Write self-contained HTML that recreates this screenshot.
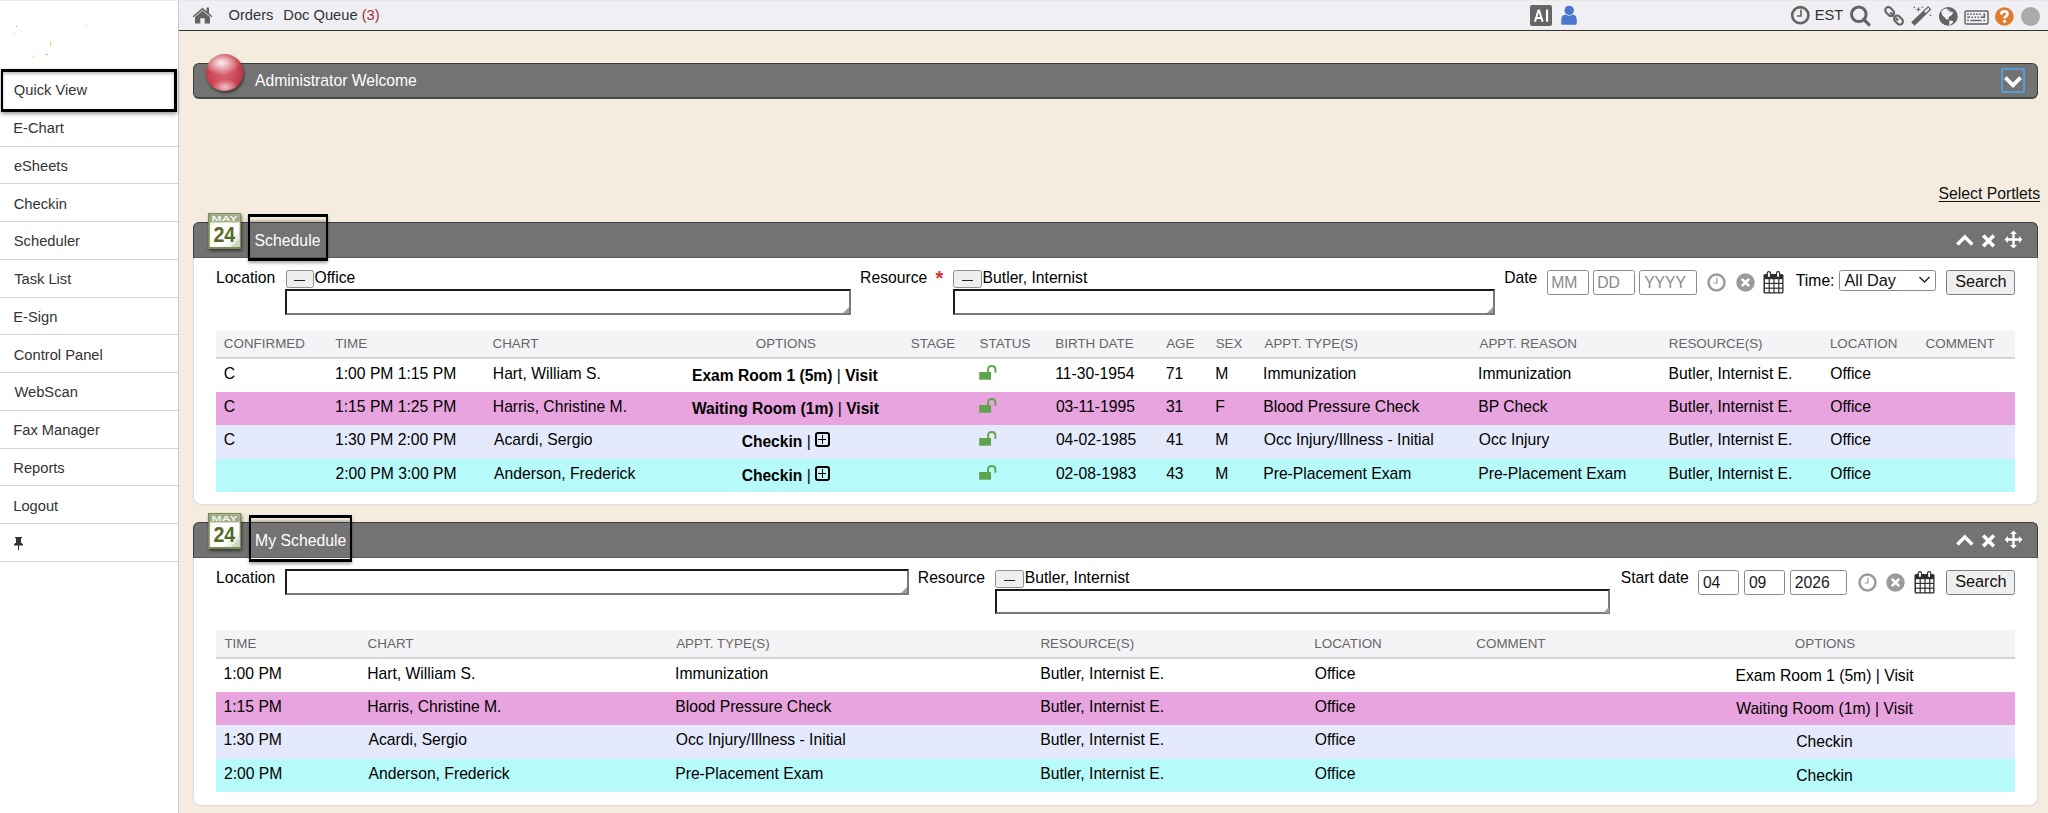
<!DOCTYPE html>
<html><head><meta charset="utf-8"><style>
html,body{margin:0;padding:0;width:2048px;height:813px;overflow:hidden;background:#f3ecdf}
body{position:relative;font-family:"Liberation Sans",sans-serif}
.t{position:absolute;white-space:pre;font-family:"Liberation Sans",sans-serif}
</style></head><body>
<div style="position:absolute;left:0px;top:0px;width:2048px;height:1px;background:#e9e9e9"></div>
<div style="position:absolute;left:0px;top:1px;width:178px;height:812px;background:#fff"></div>
<div style="position:absolute;left:178px;top:1px;width:1px;height:812px;background:#c8c9d0"></div>
<div style="position:absolute;left:179px;top:1px;width:1869px;height:29px;background:#efeff4"></div>
<div style="position:absolute;left:179px;top:30px;width:1869px;height:1px;background:#333"></div>
<div style="position:absolute;left:179px;top:31px;width:1869px;height:782px;background:#f3ecdf"></div>
<div style="position:absolute;left:16px;top:26px;width:1px;height:1px;background:#e0a030"></div>
<div style="position:absolute;left:14px;top:33px;width:1px;height:1px;background:#f0d070"></div>
<div style="position:absolute;left:50px;top:41px;width:1px;height:5px;background:#f0d060"></div>
<div style="position:absolute;left:46px;top:54px;width:2px;height:1px;background:#e8c030"></div>
<div style="position:absolute;left:33px;top:56px;width:1px;height:2px;background:#f0d060"></div>
<div style="position:absolute;left:39px;top:55px;width:1px;height:1px;background:#f4e4a0"></div>
<div style="position:absolute;left:86px;top:25px;width:1px;height:1px;background:#b0b0c0"></div>
<div style="position:absolute;left:0px;top:146px;width:178px;height:1px;background:#d4d4d4"></div>
<div style="position:absolute;left:0px;top:183px;width:178px;height:1px;background:#d4d4d4"></div>
<div style="position:absolute;left:0px;top:221px;width:178px;height:1px;background:#d4d4d4"></div>
<div style="position:absolute;left:0px;top:259px;width:178px;height:1px;background:#d4d4d4"></div>
<div style="position:absolute;left:0px;top:297px;width:178px;height:1px;background:#d4d4d4"></div>
<div style="position:absolute;left:0px;top:334px;width:178px;height:1px;background:#d4d4d4"></div>
<div style="position:absolute;left:0px;top:372px;width:178px;height:1px;background:#d4d4d4"></div>
<div style="position:absolute;left:0px;top:410px;width:178px;height:1px;background:#d4d4d4"></div>
<div style="position:absolute;left:0px;top:448px;width:178px;height:1px;background:#d4d4d4"></div>
<div style="position:absolute;left:0px;top:485px;width:178px;height:1px;background:#d4d4d4"></div>
<div style="position:absolute;left:0px;top:523px;width:178px;height:1px;background:#d4d4d4"></div>
<div style="position:absolute;left:0px;top:561px;width:178px;height:1px;background:#d4d4d4"></div>
<span class="t" style="left:13.29px;top:120.22px;font-size:14.7px;line-height:16.423px;color:#333;">E-Chart</span>
<span class="t" style="left:13.88px;top:157.97px;font-size:14.7px;line-height:16.423px;color:#333;">eSheets</span>
<span class="t" style="left:13.75px;top:195.72px;font-size:14.7px;line-height:16.423px;color:#333;">Checkin</span>
<span class="t" style="left:13.83px;top:233.47px;font-size:14.7px;line-height:16.423px;color:#333;">Scheduler</span>
<span class="t" style="left:14.17px;top:271.22px;font-size:14.7px;line-height:16.423px;color:#333;">Task List</span>
<span class="t" style="left:13.29px;top:308.97px;font-size:14.7px;line-height:16.423px;color:#333;">E-Sign</span>
<span class="t" style="left:13.75px;top:346.72px;font-size:14.7px;line-height:16.423px;color:#333;">Control Panel</span>
<span class="t" style="left:14.44px;top:384.47px;font-size:14.7px;line-height:16.423px;color:#333;">WebScan</span>
<span class="t" style="left:13.29px;top:422.22px;font-size:14.7px;line-height:16.423px;color:#333;">Fax Manager</span>
<span class="t" style="left:13.29px;top:459.97px;font-size:14.7px;line-height:16.423px;color:#333;">Reports</span>
<span class="t" style="left:13.29px;top:497.72px;font-size:14.7px;line-height:16.423px;color:#333;">Logout</span>
<div style="position:absolute;left:1px;top:69px;width:171px;height:36.5px;border-style:solid;border-color:#000;border-width:3px 3px 3px 2px;box-shadow:0 2px 4px rgba(0,0,0,.4), inset 0 2px 3px rgba(0,0,0,.25);background:#fff"></div>
<span class="t" style="left:13.80px;top:81.69px;font-size:14.7px;line-height:16.423px;color:#333;">Quick View</span>
<svg style="position:absolute;left:13px;top:537px" width="11" height="13" viewBox="0 0 11 13"><path d="M2 0h7v1.2H8v4.3l2 1.7v1.2H6v4.8H5V8.4H1V7.2l2-1.7V1.2H2z" fill="#333"/></svg>
<svg style="position:absolute;left:192px;top:7px" width="21" height="17" viewBox="0 0 21 17"><path d="M10.5 0.8 L0.6 9.2 L1.6 10.3 L10.5 2.9 L19.4 10.3 L20.4 9.2 L17 6.3 V0.5 H14.6 V4.3 Z" fill="#646464"/><path d="M3 10 L10.5 3.8 L18 10 V16.5 H12.7 V11.2 H8.3 V16.5 H3 Z" fill="#646464"/></svg>
<span class="t" style="left:228.50px;top:6.69px;font-size:14.7px;line-height:16.423px;color:#333;">Orders</span>
<span class="t" style="left:283.29px;top:6.69px;font-size:14.7px;line-height:16.423px;color:#333;">Doc Queue <span style="color:#a03030">(3)</span></span>
<div style="position:absolute;left:1530px;top:5px;width:22px;height:21px;background:#646665;border-radius:2px"></div>
<svg style="position:absolute;left:1520px;top:0px" width="40" height="30" viewBox="0 0 40 30"><path fill-rule="evenodd" d="M13.9 21.7 L17.7 9.6 L19.8 9.6 L23.6 21.7 L21.5 21.7 L20.6 18.9 L16.9 18.9 L16 21.7Z M17.4 17.1 L20.1 17.1 L18.75 12.6Z" fill="#fff"/><rect x="26" y="9.6" width="2.1" height="12.1" fill="#fff"/></svg>
<svg style="position:absolute;left:1561px;top:5px" width="16" height="21" viewBox="0 0 16 21"><circle cx="8.2" cy="5.4" r="4.7" fill="#4a77cc"/><path d="M0.2 15.5 Q0.2 9.8 4.5 9.8 L5.2 9.8 Q8.2 11.6 11.2 9.8 L11.7 9.8 Q15.8 9.8 15.8 15.5 V18.5 Q15.8 19.8 14.3 19.8 H1.7 Q0.2 19.8 0.2 18.5Z" fill="#4a77cc"/></svg>
<svg style="position:absolute;left:1790px;top:5px" width="21" height="21" viewBox="0 0 21 21"><circle cx="10.3" cy="10.2" r="8.1" fill="none" stroke="#646464" stroke-width="2.6"/><path d="M11 4.6 V11 H7" fill="none" stroke="#646464" stroke-width="1.6"/></svg>
<span class="t" style="left:1814.79px;top:6.89px;font-size:14.7px;line-height:16.423px;color:#333;">EST</span>
<svg style="position:absolute;left:1849px;top:5px" width="24" height="22" viewBox="0 0 24 22"><circle cx="9.8" cy="9.3" r="7.3" fill="none" stroke="#646464" stroke-width="3"/><path d="M14.8 14.5 L20 19.7" stroke="#646464" stroke-width="3.2" stroke-linecap="round"/></svg>
<svg style="position:absolute;left:1880px;top:2px" width="56" height="28" viewBox="0 0 56 28"><g fill="none" stroke="#646464" stroke-width="2.1"><rect x="6.6" y="4.6" width="6.2" height="10" rx="3.1" transform="rotate(-45 9.7 9.6)"/><rect x="15.4" y="13.1" width="6.2" height="10" rx="3.1" transform="rotate(-45 18.5 18.1)"/></g><g fill="#646464"><rect x="10.3" y="10" width="2.2" height="3.4" transform="rotate(-45 11.4 11.7)"/><rect x="15.8" y="15.5" width="2.2" height="3.4" transform="rotate(-45 16.9 17.2)"/></g><path d="M31.2 20.3 L48.2 4.1 L51.3 7.4 L34.6 23.8 Z" fill="#646464"/><path d="M44.2 9.6 L48.3 5.8 L49.6 7.2 L45.6 11 Z" fill="#efeff4"/><path d="M38.4 4.6 L39.1 6.7 L41.2 7.4 L39.1 8.1 L38.4 10.3 L37.7 8.1 L35.6 7.4 L37.7 6.7Z M34.3 4 L34.7 4.9 L35.6 5.3 L34.7 5.7 L34.3 6.6 L33.9 5.7 L33 5.3 L33.9 4.9Z M42.2 3.9 L42.6 4.8 L43.5 5.2 L42.6 5.6 L42.2 6.5 L41.8 5.6 L40.9 5.2 L41.8 4.8Z M50.4 12 L50.8 12.9 L51.7 13.3 L50.8 13.7 L50.4 14.6 L50 13.7 L49.1 13.3 L50 12.9Z" fill="#646464"/></svg>
<svg style="position:absolute;left:1939px;top:7px" width="19" height="19" viewBox="0 0 19 19"><circle cx="9.3" cy="9.4" r="9.4" fill="#646464"/><path d="M2.2 4.6 L5 2 L8 1.6 L8.8 3 L10.2 2.6 L10.8 4.2 L14.6 5.4 L12.4 8.2 L10 9.8 L9.4 12.6 L7.6 12.4 L5.4 10.2 L3.4 8.2 Z M10 14.2 L12.2 13.4 L14.8 14.8 L11.8 17.6 L10.2 18.2 L10.4 16 Z" fill="#efeff4"/><path d="M8.4 3.2 L9.6 3.6 L9.2 4.6 Z M10.6 4.6 L11.6 5.2 L10.8 5.8Z" fill="#646464"/></svg>
<svg style="position:absolute;left:1964px;top:10px" width="25" height="15" viewBox="0 0 25 15"><rect x="1" y="1" width="23" height="13" rx="1.5" fill="none" stroke="#646464" stroke-width="1.5"/><g fill="#646464"><rect x="3.2" y="3.4" width="1.6" height="1.6"/><rect x="6.2" y="3.4" width="1.6" height="1.6"/><rect x="9.2" y="3.4" width="1.6" height="1.6"/><rect x="12.2" y="3.4" width="1.6" height="1.6"/><rect x="15.2" y="3.4" width="1.6" height="1.6"/><rect x="19.5" y="3.4" width="1.6" height="4.5"/><rect x="3.2" y="6.5" width="3" height="1.5"/><rect x="7.5" y="6.5" width="1.5" height="1.5"/><rect x="10.5" y="6.5" width="1.5" height="1.5"/><rect x="13.5" y="6.5" width="1.5" height="1.5"/><rect x="16.5" y="6.5" width="3.5" height="1.5"/><rect x="3.2" y="9.6" width="1.6" height="1.6"/><rect x="6.5" y="9.8" width="11" height="1.4"/><rect x="19.5" y="9.6" width="1.6" height="1.6"/></g></svg>
<svg style="position:absolute;left:1995px;top:7px" width="19" height="19" viewBox="0 0 19 19"><circle cx="9.4" cy="9.5" r="9.35" fill="#e07b31"/><path d="M6.3 7.4 Q6.3 4.3 9.3 4.3 Q12.5 4.3 12.5 6.9 Q12.5 8.3 11 9.2 Q9.6 10 9.6 11.6" fill="none" stroke="#fff" stroke-width="2.7"/><rect x="8.2" y="13" width="2.8" height="2.8" fill="#fff"/></svg>
<div style="position:absolute;left:2021px;top:7px;width:19px;height:19px;border-radius:50%;background:#aaa"></div>
<div style="position:absolute;left:193px;top:63px;width:1843px;height:33px;background:#737373;border:1px solid #3e3e3e;border-bottom:2px solid #4a4a4a;border-radius:6px"></div>
<div style="position:absolute;left:206px;top:54px;width:36.5px;height:36.5px;border-radius:50%;background:radial-gradient(ellipse 50% 32% at 42% 24%, rgba(255,255,255,.92) 0%, rgba(255,240,242,.55) 45%, rgba(255,255,255,0) 100%), radial-gradient(ellipse 38% 22% at 52% 90%, rgba(255,225,230,.8) 0%, rgba(255,225,230,0) 100%), radial-gradient(circle at 48% 50%, #d86876 0%, #cf4b59 45%, #c0303d 78%, #a51e2a 100%);box-shadow:1px 2px 3px rgba(0,0,0,.55)"></div>
<span class="t" style="left:254.97px;top:71.69px;font-size:15.7px;line-height:17.540px;color:#fff;">Administrator Welcome</span>
<div style="position:absolute;left:2001px;top:68px;width:20px;height:21px;border:2px solid #5b9ad8;border-radius:2px"></div>
<svg style="position:absolute;left:2003px;top:75px" width="20" height="14" viewBox="0 0 20 14"><path d="M2.4 2.6 L10 10.4 L17.6 2.6" fill="none" stroke="#fff" stroke-width="3.8"/></svg>
<span class="t" style="left:1938.58px;top:184.54px;font-size:15.75px;line-height:17.596px;color:#111;text-decoration:underline;text-underline-offset:2px">Select Portlets</span>
<div style="position:absolute;left:194px;top:257px;width:1843px;height:247px;background:#fff;border-radius:0 0 7px 7px;box-shadow:0 0 2px 0 rgba(140,150,200,.6)"></div>
<div style="position:absolute;left:193px;top:222px;width:1843px;height:34px;background:#737373;border:1px solid #3d3d3d;border-bottom:1px solid #5a5a5a;border-radius:6px 6px 0 0"></div>
<div style="position:absolute;left:207.6px;top:213px;width:33.5px;height:36px;box-shadow:1px 2px 3px rgba(0,0,0,.55)"><svg width="33.5" height="36" viewBox="0 0 33.5 36" style="display:block"><defs><linearGradient id="cg1" x1="0" y1="0" x2="1" y2="1"><stop offset="0" stop-color="#e4e4e0"/><stop offset=".3" stop-color="#fff"/><stop offset=".7" stop-color="#fbfbf9"/><stop offset="1" stop-color="#dcdcd4"/></linearGradient></defs><rect x="0" y="0" width="33.5" height="36" fill="#7b8c55"/><rect x="1.8" y="1.2" width="29.9" height="32.8" fill="url(#cg1)"/><rect x="1.8" y="1.2" width="29.9" height="7.8" fill="#9da987"/><rect x="1.8" y="8.6" width="29.9" height="1" fill="#b9c3a4"/><text x="16.6" y="7.9" text-anchor="middle" font-family="Liberation Sans" font-size="7.4" fill="#f2f4ec" font-weight="700" textLength="26" lengthAdjust="spacingAndGlyphs">MAY</text><text x="16.3" y="28.9" text-anchor="middle" font-family="Liberation Sans" font-size="22.5" font-weight="700" fill="#56692a" textLength="21.8" lengthAdjust="spacingAndGlyphs">24</text><path d="M22.5 34 L31.7 25 L31.7 34Z" fill="#cdd5bb"/><path d="M22.5 34 L31.7 25" stroke="#e8ece0" stroke-width=".8"/></svg></div>
<div style="position:absolute;left:250px;top:217px;width:76px;height:5px;background:#f3ecdf;box-shadow:inset 0 -2px 2px rgba(0,0,0,.2)"></div>
<div style="position:absolute;left:248px;top:214px;width:76px;height:41px;border-style:solid;border-color:#000;border-width:3px 2px 3px 2px;box-shadow:0 2px 3px rgba(0,0,0,.35)"></div>
<span class="t" style="left:254.58px;top:231.90px;font-size:15.8px;line-height:17.652px;color:#fff;">Schedule</span>
<svg style="position:absolute;left:1955px;top:234px" width="20" height="13" viewBox="0 0 20 13"><path d="M2.3 10.5 L9.8 3 L17.3 10.5" fill="none" stroke="#fff" stroke-width="3.4"/></svg>
<svg style="position:absolute;left:1981px;top:234px" width="15" height="14" viewBox="0 0 15 14"><path d="M2.2 1.6 L12.8 12.2 M12.8 1.6 L2.2 12.2" fill="none" stroke="#fff" stroke-width="3.6"/></svg>
<svg style="position:absolute;left:2004px;top:230px" width="19" height="19" viewBox="0 0 19 19"><path d="M9.5 0.5 L13 4 H10.7 V8.3 H15 V6 L18.5 9.5 L15 13 V10.7 H10.7 V15 H13 L9.5 18.5 L6 15 H8.3 V10.7 H4 V13 L0.5 9.5 L4 6 V8.3 H8.3 V4 H6Z" fill="#fff"/></svg>
<span class="t" style="left:215.91px;top:268.89px;font-size:15.7px;line-height:17.540px;color:#000;">Location</span>
<div style="position:absolute;left:285.5px;top:270.20000000000005px;width:26.5px;height:16.3px;background:#efefef;border:1px solid #8f8f8f;border-radius:2.5px"></div>
<div style="position:absolute;left:294.0px;top:279.90000000000003px;width:11px;height:1.3px;background:#222"></div>
<span class="t" style="left:314.56px;top:268.89px;font-size:15.7px;line-height:17.540px;color:#000;">Office</span>
<div style="position:absolute;left:285px;top:289px;width:562px;height:21.5px;background:#fff;border:2px solid;border-color:#1b1b1b #7a7a7a #7a7a7a #1b1b1b"></div>
<svg style="position:absolute;left:843px;top:306.5px" width="6" height="6" viewBox="0 0 6 6"><path d="M6 0 V6 H0Z" fill="#a0a0a0"/></svg>
<span class="t" style="left:860.11px;top:268.89px;font-size:15.7px;line-height:17.540px;color:#000;">Resource</span>
<span class="t" style="left:935.44px;top:267.39px;font-size:20px;line-height:22.344px;color:#d9302c;font-weight:700;">*</span>
<div style="position:absolute;left:953px;top:269.90000000000003px;width:26.5px;height:16.3px;background:#efefef;border:1px solid #8f8f8f;border-radius:2.5px"></div>
<div style="position:absolute;left:961.5px;top:279.6px;width:11px;height:1.3px;background:#222"></div>
<span class="t" style="left:982.61px;top:268.89px;font-size:15.7px;line-height:17.540px;color:#000;">Butler, Internist</span>
<div style="position:absolute;left:953px;top:289px;width:538px;height:21.5px;background:#fff;border:2px solid;border-color:#1b1b1b #7a7a7a #7a7a7a #1b1b1b"></div>
<svg style="position:absolute;left:1487px;top:306.5px" width="6" height="6" viewBox="0 0 6 6"><path d="M6 0 V6 H0Z" fill="#a0a0a0"/></svg>
<span class="t" style="left:1504.21px;top:268.79px;font-size:15.7px;line-height:17.540px;color:#000;">Date</span>
<div style="position:absolute;left:1547px;top:270px;width:40px;height:23px;background:#fff;border:1px solid #8a8a8a;border-radius:2.5px"></div>
<span class="t" style="left:1551.21px;top:274.49px;font-size:15.7px;line-height:17.540px;color:#8a8a8a;">MM</span>
<div style="position:absolute;left:1593px;top:270px;width:40px;height:23px;background:#fff;border:1px solid #8a8a8a;border-radius:2.5px"></div>
<span class="t" style="left:1597.21px;top:274.49px;font-size:15.7px;line-height:17.540px;color:#8a8a8a;">DD</span>
<div style="position:absolute;left:1639px;top:270px;width:55.5px;height:23px;background:#fff;border:1px solid #8a8a8a;border-radius:2.5px"></div>
<span class="t" style="left:1644.16px;top:274.49px;font-size:15.7px;line-height:17.540px;color:#8a8a8a;">YYYY</span>
<svg style="position:absolute;left:1707px;top:272.5px" width="20" height="20" viewBox="0 0 20 20"><circle cx="9.5" cy="9.5" r="8" fill="none" stroke="#9b9b9b" stroke-width="2.5"/><path d="M9.9 4.5 V10 H6.5" fill="none" stroke="#9b9b9b" stroke-width="1.2"/></svg>
<svg style="position:absolute;left:1735.6px;top:272.5px" width="20" height="20" viewBox="0 0 20 20"><circle cx="9.5" cy="9.5" r="9.2" fill="#9b9b9b"/><path d="M5.8 5.8 L13.2 13.2 M13.2 5.8 L5.8 13.2" stroke="#fff" stroke-width="2.6"/></svg>
<svg style="position:absolute;left:1763.3px;top:270.7px" width="21" height="23" viewBox="0 0 21 23"><rect x="0.5" y="3" width="20" height="19.5" rx="1.5" fill="#2f2f2f"/><g fill="#fff"><rect x="2" y="8.2" width="3.6" height="3.6"/><rect x="6.8" y="8.2" width="3.6" height="3.6"/><rect x="11.6" y="8.2" width="3.6" height="3.6"/><rect x="16.4" y="8.2" width="2.8" height="3.6"/><rect x="2" y="13" width="3.6" height="3.6"/><rect x="6.8" y="13" width="3.6" height="3.6"/><rect x="11.6" y="13" width="3.6" height="3.6"/><rect x="16.4" y="13" width="2.8" height="3.6"/><rect x="2" y="17.8" width="3.6" height="3.4"/><rect x="6.8" y="17.8" width="3.6" height="3.4"/><rect x="11.6" y="17.8" width="3.6" height="3.4"/><rect x="16.4" y="17.8" width="2.8" height="3.4"/></g><rect x="4.3" y="0.6" width="3.2" height="6" rx="1.6" fill="#fff" stroke="#2f2f2f" stroke-width="1.2"/><rect x="13.5" y="0.6" width="3.2" height="6" rx="1.6" fill="#fff" stroke="#2f2f2f" stroke-width="1.2"/></svg>
<span class="t" style="left:1795.85px;top:271.99px;font-size:15.7px;line-height:17.540px;color:#000;">Time:</span>
<div style="position:absolute;left:1838.5px;top:270px;width:95.5px;height:19px;background:#fff;border:1px solid #8a8a8a;border-radius:2.5px"></div>
<span class="t" style="left:1844.47px;top:271.49px;font-size:16.25px;line-height:18.154px;color:#111;">All Day</span>
<svg style="position:absolute;left:1918px;top:275px" width="13" height="9" viewBox="0 0 13 9"><path d="M1.5 2 L6.5 7 L11.5 2" fill="none" stroke="#222" stroke-width="1.4"/></svg>
<div style="position:absolute;left:1946px;top:269.5px;width:67px;height:23.0px;background:#efefef;border:1px solid #7f7f7f;border-radius:2.5px"></div>
<span class="t" style="left:1955.16px;top:272.09px;font-size:16.25px;line-height:18.154px;color:#111;">Search</span>
<div style="position:absolute;left:216px;top:330px;width:1799px;height:27px;background:#f4f4f6"></div>
<div style="position:absolute;left:216px;top:357px;width:1799px;height:2px;background:#d3d3d3"></div>
<span class="t" style="left:223.82px;top:336.97px;font-size:13.4px;line-height:14.970px;color:#666;">CONFIRMED</span>
<span class="t" style="left:335.20px;top:336.97px;font-size:13.4px;line-height:14.970px;color:#666;">TIME</span>
<span class="t" style="left:492.52px;top:336.97px;font-size:13.4px;line-height:14.970px;color:#666;">CHART</span>
<span class="t" style="left:755.77px;top:336.97px;font-size:13.4px;line-height:14.970px;color:#666;">OPTIONS</span>
<span class="t" style="left:910.79px;top:336.97px;font-size:13.4px;line-height:14.970px;color:#666;">STAGE</span>
<span class="t" style="left:979.59px;top:336.97px;font-size:13.4px;line-height:14.970px;color:#666;">STATUS</span>
<span class="t" style="left:1055.30px;top:336.97px;font-size:13.4px;line-height:14.970px;color:#666;">BIRTH DATE</span>
<span class="t" style="left:1166.17px;top:336.97px;font-size:13.4px;line-height:14.970px;color:#666;">AGE</span>
<span class="t" style="left:1215.69px;top:336.97px;font-size:13.4px;line-height:14.970px;color:#666;">SEX</span>
<span class="t" style="left:1264.47px;top:336.97px;font-size:13.4px;line-height:14.970px;color:#666;">APPT. TYPE(S)</span>
<span class="t" style="left:1479.47px;top:336.97px;font-size:13.4px;line-height:14.970px;color:#666;">APPT. REASON</span>
<span class="t" style="left:1668.80px;top:336.97px;font-size:13.4px;line-height:14.970px;color:#666;">RESOURCE(S)</span>
<span class="t" style="left:1829.90px;top:336.97px;font-size:13.4px;line-height:14.970px;color:#666;">LOCATION</span>
<span class="t" style="left:1925.62px;top:336.97px;font-size:13.4px;line-height:14.970px;color:#666;">COMMENT</span>
<div style="position:absolute;left:216px;top:359px;width:1799px;height:33px;background:#ffffff"></div>
<div style="position:absolute;left:216px;top:392px;width:1799px;height:33px;background:#e8a4de"></div>
<div style="position:absolute;left:216px;top:425px;width:1799px;height:34px;background:#e4e9fb"></div>
<div style="position:absolute;left:216px;top:459px;width:1799px;height:33px;background:#b7fafa"></div>
<span class="t" style="left:223.70px;top:364.79px;font-size:15.7px;line-height:17.540px;color:#000;">C</span>
<span class="t" style="left:335.00px;top:364.79px;font-size:15.7px;line-height:17.540px;color:#000;">1:00 PM 1:15 PM</span>
<span class="t" style="left:492.81px;top:364.79px;font-size:15.7px;line-height:17.540px;color:#000;">Hart, William S.</span>
<span class="t" style="left:692.06px;top:367.18px;font-size:15.6px;line-height:17.428px;color:#000;font-weight:700;">Exam Room 1 (5m) <span style="font-weight:400">|</span> Visit</span>
<svg style="position:absolute;left:979px;top:365px" width="19" height="16" viewBox="0 0 19 16"><rect x="0.2" y="7" width="11.8" height="7.7" fill="#5fa34f"/><path d="M9.1 7.2 V4.6 Q9.1 1 12.8 1 Q16.4 1 16.4 4.6 V7.8" fill="none" stroke="#5fa34f" stroke-width="1.9"/></svg>
<span class="t" style="left:1055.30px;top:364.79px;font-size:15.7px;line-height:17.540px;color:#000;">11-30-1954</span>
<span class="t" style="left:1165.70px;top:364.79px;font-size:15.7px;line-height:17.540px;color:#000;">71</span>
<span class="t" style="left:1215.21px;top:364.79px;font-size:15.7px;line-height:17.540px;color:#000;">M</span>
<span class="t" style="left:1263.05px;top:364.79px;font-size:15.7px;line-height:17.540px;color:#000;">Immunization</span>
<span class="t" style="left:1478.05px;top:364.79px;font-size:15.7px;line-height:17.540px;color:#000;">Immunization</span>
<span class="t" style="left:1668.61px;top:364.79px;font-size:15.7px;line-height:17.540px;color:#000;">Butler, Internist E.</span>
<span class="t" style="left:1830.26px;top:364.79px;font-size:15.7px;line-height:17.540px;color:#000;">Office</span>
<span class="t" style="left:223.70px;top:397.79px;font-size:15.7px;line-height:17.540px;color:#000;">C</span>
<span class="t" style="left:335.00px;top:397.79px;font-size:15.7px;line-height:17.540px;color:#000;">1:15 PM 1:25 PM</span>
<span class="t" style="left:492.81px;top:397.79px;font-size:15.7px;line-height:17.540px;color:#000;">Harris, Christine M.</span>
<span class="t" style="left:691.98px;top:400.18px;font-size:15.6px;line-height:17.428px;color:#000;font-weight:700;">Waiting Room (1m) <span style="font-weight:400">|</span> Visit</span>
<svg style="position:absolute;left:979px;top:398px" width="19" height="16" viewBox="0 0 19 16"><rect x="0.2" y="7" width="11.8" height="7.7" fill="#5fa34f"/><path d="M9.1 7.2 V4.6 Q9.1 1 12.8 1 Q16.4 1 16.4 4.6 V7.8" fill="none" stroke="#5fa34f" stroke-width="1.9"/></svg>
<span class="t" style="left:1055.89px;top:397.79px;font-size:15.7px;line-height:17.540px;color:#000;">03-11-1995</span>
<span class="t" style="left:1165.90px;top:397.79px;font-size:15.7px;line-height:17.540px;color:#000;">31</span>
<span class="t" style="left:1215.21px;top:397.79px;font-size:15.7px;line-height:17.540px;color:#000;">F</span>
<span class="t" style="left:1263.21px;top:397.79px;font-size:15.7px;line-height:17.540px;color:#000;">Blood Pressure Check</span>
<span class="t" style="left:1478.21px;top:397.79px;font-size:15.7px;line-height:17.540px;color:#000;">BP Check</span>
<span class="t" style="left:1668.61px;top:397.79px;font-size:15.7px;line-height:17.540px;color:#000;">Butler, Internist E.</span>
<span class="t" style="left:1830.26px;top:397.79px;font-size:15.7px;line-height:17.540px;color:#000;">Office</span>
<span class="t" style="left:223.70px;top:430.79px;font-size:15.7px;line-height:17.540px;color:#000;">C</span>
<span class="t" style="left:335.00px;top:430.79px;font-size:15.7px;line-height:17.540px;color:#000;">1:30 PM 2:00 PM</span>
<span class="t" style="left:494.07px;top:430.79px;font-size:15.7px;line-height:17.540px;color:#000;">Acardi, Sergio</span>
<span class="t" style="left:741.66px;top:432.88px;font-size:15.6px;line-height:17.428px;color:#000;font-weight:700;">Checkin</span>
<span class="t" style="left:806.70px;top:433.19px;font-size:15.7px;line-height:17.540px;color:#000;">|</span>
<div style="position:absolute;left:815px;top:432.2px;width:10.6px;height:10.6px;border:2px solid #000;border-radius:3px"></div><div style="position:absolute;left:818.1px;top:438.8px;width:8.4px;height:1.4px;background:#000"></div><div style="position:absolute;left:821.6px;top:435.3px;width:1.4px;height:8.4px;background:#000"></div>
<svg style="position:absolute;left:979px;top:431px" width="19" height="16" viewBox="0 0 19 16"><rect x="0.2" y="7" width="11.8" height="7.7" fill="#5fa34f"/><path d="M9.1 7.2 V4.6 Q9.1 1 12.8 1 Q16.4 1 16.4 4.6 V7.8" fill="none" stroke="#5fa34f" stroke-width="1.9"/></svg>
<span class="t" style="left:1055.89px;top:430.79px;font-size:15.7px;line-height:17.540px;color:#000;">04-02-1985</span>
<span class="t" style="left:1166.14px;top:430.79px;font-size:15.7px;line-height:17.540px;color:#000;">41</span>
<span class="t" style="left:1215.21px;top:430.79px;font-size:15.7px;line-height:17.540px;color:#000;">M</span>
<span class="t" style="left:1263.76px;top:430.79px;font-size:15.7px;line-height:17.540px;color:#000;">Occ Injury/Illness - Initial</span>
<span class="t" style="left:1478.76px;top:430.79px;font-size:15.7px;line-height:17.540px;color:#000;">Occ Injury</span>
<span class="t" style="left:1668.61px;top:430.79px;font-size:15.7px;line-height:17.540px;color:#000;">Butler, Internist E.</span>
<span class="t" style="left:1830.26px;top:430.79px;font-size:15.7px;line-height:17.540px;color:#000;">Office</span>
<span class="t" style="left:335.41px;top:464.79px;font-size:15.7px;line-height:17.540px;color:#000;">2:00 PM 3:00 PM</span>
<span class="t" style="left:494.07px;top:464.79px;font-size:15.7px;line-height:17.540px;color:#000;">Anderson, Frederick</span>
<span class="t" style="left:741.66px;top:466.88px;font-size:15.6px;line-height:17.428px;color:#000;font-weight:700;">Checkin</span>
<span class="t" style="left:806.70px;top:467.19px;font-size:15.7px;line-height:17.540px;color:#000;">|</span>
<div style="position:absolute;left:815px;top:466.2px;width:10.6px;height:10.6px;border:2px solid #000;border-radius:3px"></div><div style="position:absolute;left:818.1px;top:472.8px;width:8.4px;height:1.4px;background:#000"></div><div style="position:absolute;left:821.6px;top:469.3px;width:1.4px;height:8.4px;background:#000"></div>
<svg style="position:absolute;left:979px;top:465px" width="19" height="16" viewBox="0 0 19 16"><rect x="0.2" y="7" width="11.8" height="7.7" fill="#5fa34f"/><path d="M9.1 7.2 V4.6 Q9.1 1 12.8 1 Q16.4 1 16.4 4.6 V7.8" fill="none" stroke="#5fa34f" stroke-width="1.9"/></svg>
<span class="t" style="left:1055.89px;top:464.79px;font-size:15.7px;line-height:17.540px;color:#000;">02-08-1983</span>
<span class="t" style="left:1166.14px;top:464.79px;font-size:15.7px;line-height:17.540px;color:#000;">43</span>
<span class="t" style="left:1215.21px;top:464.79px;font-size:15.7px;line-height:17.540px;color:#000;">M</span>
<span class="t" style="left:1263.21px;top:464.79px;font-size:15.7px;line-height:17.540px;color:#000;">Pre-Placement Exam</span>
<span class="t" style="left:1478.21px;top:464.79px;font-size:15.7px;line-height:17.540px;color:#000;">Pre-Placement Exam</span>
<span class="t" style="left:1668.61px;top:464.79px;font-size:15.7px;line-height:17.540px;color:#000;">Butler, Internist E.</span>
<span class="t" style="left:1830.26px;top:464.79px;font-size:15.7px;line-height:17.540px;color:#000;">Office</span>
<div style="position:absolute;left:194px;top:557px;width:1843px;height:248px;background:#fff;border-radius:0 0 7px 7px;box-shadow:0 0 2px 0 rgba(140,150,200,.6)"></div>
<div style="position:absolute;left:193px;top:522px;width:1843px;height:34px;background:#737373;border:1px solid #3d3d3d;border-bottom:1px solid #5a5a5a;border-radius:6px 6px 0 0"></div>
<div style="position:absolute;left:207.6px;top:513px;width:33.5px;height:36px;box-shadow:1px 2px 3px rgba(0,0,0,.55)"><svg width="33.5" height="36" viewBox="0 0 33.5 36" style="display:block"><defs><linearGradient id="cg2" x1="0" y1="0" x2="1" y2="1"><stop offset="0" stop-color="#e4e4e0"/><stop offset=".3" stop-color="#fff"/><stop offset=".7" stop-color="#fbfbf9"/><stop offset="1" stop-color="#dcdcd4"/></linearGradient></defs><rect x="0" y="0" width="33.5" height="36" fill="#7b8c55"/><rect x="1.8" y="1.2" width="29.9" height="32.8" fill="url(#cg2)"/><rect x="1.8" y="1.2" width="29.9" height="7.8" fill="#9da987"/><rect x="1.8" y="8.6" width="29.9" height="1" fill="#b9c3a4"/><text x="16.6" y="7.9" text-anchor="middle" font-family="Liberation Sans" font-size="7.4" fill="#f2f4ec" font-weight="700" textLength="26" lengthAdjust="spacingAndGlyphs">MAY</text><text x="16.3" y="28.9" text-anchor="middle" font-family="Liberation Sans" font-size="22.5" font-weight="700" fill="#56692a" textLength="21.8" lengthAdjust="spacingAndGlyphs">24</text><path d="M22.5 34 L31.7 25 L31.7 34Z" fill="#cdd5bb"/><path d="M22.5 34 L31.7 25" stroke="#e8ece0" stroke-width=".8"/></svg></div>
<div style="position:absolute;left:251px;top:518px;width:99px;height:4px;background:#f3ecdf;box-shadow:inset 0 -2px 2px rgba(0,0,0,.2)"></div>
<div style="position:absolute;left:249px;top:515px;width:99px;height:41px;border-style:solid;border-color:#000;border-width:3px 2px 3px 2px;box-shadow:0 2px 3px rgba(0,0,0,.35)"></div>
<span class="t" style="left:255.00px;top:531.90px;font-size:15.8px;line-height:17.652px;color:#fff;">My Schedule</span>
<svg style="position:absolute;left:1955px;top:534px" width="20" height="13" viewBox="0 0 20 13"><path d="M2.3 10.5 L9.8 3 L17.3 10.5" fill="none" stroke="#fff" stroke-width="3.4"/></svg>
<svg style="position:absolute;left:1981px;top:534px" width="15" height="14" viewBox="0 0 15 14"><path d="M2.2 1.6 L12.8 12.2 M12.8 1.6 L2.2 12.2" fill="none" stroke="#fff" stroke-width="3.6"/></svg>
<svg style="position:absolute;left:2004px;top:530px" width="19" height="19" viewBox="0 0 19 19"><path d="M9.5 0.5 L13 4 H10.7 V8.3 H15 V6 L18.5 9.5 L15 13 V10.7 H10.7 V15 H13 L9.5 18.5 L6 15 H8.3 V10.7 H4 V13 L0.5 9.5 L4 6 V8.3 H8.3 V4 H6Z" fill="#fff"/></svg>
<span class="t" style="left:216.01px;top:568.69px;font-size:15.7px;line-height:17.540px;color:#000;">Location</span>
<div style="position:absolute;left:285px;top:569px;width:619.5px;height:22px;background:#fff;border:2px solid;border-color:#1b1b1b #7a7a7a #7a7a7a #1b1b1b"></div>
<svg style="position:absolute;left:900.5px;top:587px" width="6" height="6" viewBox="0 0 6 6"><path d="M6 0 V6 H0Z" fill="#a0a0a0"/></svg>
<span class="t" style="left:917.81px;top:568.99px;font-size:15.7px;line-height:17.540px;color:#000;">Resource</span>
<div style="position:absolute;left:995.3px;top:570.1px;width:26.5px;height:16.3px;background:#efefef;border:1px solid #8f8f8f;border-radius:2.5px"></div>
<div style="position:absolute;left:1003.8px;top:579.8px;width:11px;height:1.3px;background:#222"></div>
<span class="t" style="left:1024.71px;top:568.99px;font-size:15.7px;line-height:17.540px;color:#000;">Butler, Internist</span>
<div style="position:absolute;left:995.3px;top:589.3px;width:611.2px;height:21.200000000000045px;background:#fff;border:2px solid;border-color:#1b1b1b #7a7a7a #7a7a7a #1b1b1b"></div>
<svg style="position:absolute;left:1602.5px;top:606.5px" width="6" height="6" viewBox="0 0 6 6"><path d="M6 0 V6 H0Z" fill="#a0a0a0"/></svg>
<span class="t" style="left:1620.79px;top:568.79px;font-size:15.7px;line-height:17.540px;color:#000;">Start date</span>
<div style="position:absolute;left:1698px;top:570px;width:39px;height:23px;background:#fff;border:1px solid #8a8a8a;border-radius:2.5px"></div>
<span class="t" style="left:1702.89px;top:574.49px;font-size:15.7px;line-height:17.540px;color:#1a1a1a;">04</span>
<div style="position:absolute;left:1744px;top:570px;width:39px;height:23px;background:#fff;border:1px solid #8a8a8a;border-radius:2.5px"></div>
<span class="t" style="left:1748.89px;top:574.49px;font-size:15.7px;line-height:17.540px;color:#1a1a1a;">09</span>
<div style="position:absolute;left:1790px;top:570px;width:55px;height:23px;background:#fff;border:1px solid #8a8a8a;border-radius:2.5px"></div>
<span class="t" style="left:1794.71px;top:574.49px;font-size:15.7px;line-height:17.540px;color:#1a1a1a;">2026</span>
<svg style="position:absolute;left:1857.5px;top:572.5px" width="20" height="20" viewBox="0 0 20 20"><circle cx="9.5" cy="9.5" r="8" fill="none" stroke="#9b9b9b" stroke-width="2.5"/><path d="M9.9 4.5 V10 H6.5" fill="none" stroke="#9b9b9b" stroke-width="1.2"/></svg>
<svg style="position:absolute;left:1886.1px;top:572.5px" width="20" height="20" viewBox="0 0 20 20"><circle cx="9.5" cy="9.5" r="9.2" fill="#9b9b9b"/><path d="M5.8 5.8 L13.2 13.2 M13.2 5.8 L5.8 13.2" stroke="#fff" stroke-width="2.6"/></svg>
<svg style="position:absolute;left:1913.8px;top:570.7px" width="21" height="23" viewBox="0 0 21 23"><rect x="0.5" y="3" width="20" height="19.5" rx="1.5" fill="#2f2f2f"/><g fill="#fff"><rect x="2" y="8.2" width="3.6" height="3.6"/><rect x="6.8" y="8.2" width="3.6" height="3.6"/><rect x="11.6" y="8.2" width="3.6" height="3.6"/><rect x="16.4" y="8.2" width="2.8" height="3.6"/><rect x="2" y="13" width="3.6" height="3.6"/><rect x="6.8" y="13" width="3.6" height="3.6"/><rect x="11.6" y="13" width="3.6" height="3.6"/><rect x="16.4" y="13" width="2.8" height="3.6"/><rect x="2" y="17.8" width="3.6" height="3.4"/><rect x="6.8" y="17.8" width="3.6" height="3.4"/><rect x="11.6" y="17.8" width="3.6" height="3.4"/><rect x="16.4" y="17.8" width="2.8" height="3.4"/></g><rect x="4.3" y="0.6" width="3.2" height="6" rx="1.6" fill="#fff" stroke="#2f2f2f" stroke-width="1.2"/><rect x="13.5" y="0.6" width="3.2" height="6" rx="1.6" fill="#fff" stroke="#2f2f2f" stroke-width="1.2"/></svg>
<div style="position:absolute;left:1946px;top:569.5px;width:67px;height:23.5px;background:#efefef;border:1px solid #7f7f7f;border-radius:2.5px"></div>
<span class="t" style="left:1955.16px;top:572.09px;font-size:16.25px;line-height:18.154px;color:#111;">Search</span>
<div style="position:absolute;left:216px;top:630px;width:1799px;height:27px;background:#f4f4f6"></div>
<div style="position:absolute;left:216px;top:657px;width:1799px;height:2px;background:#d3d3d3"></div>
<span class="t" style="left:224.40px;top:636.97px;font-size:13.4px;line-height:14.970px;color:#666;">TIME</span>
<span class="t" style="left:367.62px;top:636.97px;font-size:13.4px;line-height:14.970px;color:#666;">CHART</span>
<span class="t" style="left:676.17px;top:636.97px;font-size:13.4px;line-height:14.970px;color:#666;">APPT. TYPE(S)</span>
<span class="t" style="left:1040.40px;top:636.97px;font-size:13.4px;line-height:14.970px;color:#666;">RESOURCE(S)</span>
<span class="t" style="left:1314.30px;top:636.97px;font-size:13.4px;line-height:14.970px;color:#666;">LOCATION</span>
<span class="t" style="left:1476.32px;top:636.97px;font-size:13.4px;line-height:14.970px;color:#666;">COMMENT</span>
<span class="t" style="left:1794.87px;top:636.97px;font-size:13.4px;line-height:14.970px;color:#666;">OPTIONS</span>
<div style="position:absolute;left:216px;top:659px;width:1799px;height:33px;background:#ffffff"></div>
<div style="position:absolute;left:216px;top:692px;width:1799px;height:33px;background:#e8a4de"></div>
<div style="position:absolute;left:216px;top:725px;width:1799px;height:34px;background:#e4e9fb"></div>
<div style="position:absolute;left:216px;top:759px;width:1799px;height:33px;background:#b7fafa"></div>
<span class="t" style="left:223.50px;top:664.79px;font-size:15.7px;line-height:17.540px;color:#000;">1:00 PM</span>
<span class="t" style="left:367.21px;top:664.79px;font-size:15.7px;line-height:17.540px;color:#000;">Hart, William S.</span>
<span class="t" style="left:675.05px;top:664.79px;font-size:15.7px;line-height:17.540px;color:#000;">Immunization</span>
<span class="t" style="left:1040.21px;top:664.79px;font-size:15.7px;line-height:17.540px;color:#000;">Butler, Internist E.</span>
<span class="t" style="left:1314.76px;top:664.79px;font-size:15.7px;line-height:17.540px;color:#000;">Office</span>
<span class="t" style="left:1624.5px;width:400px;text-align:center;top:667.09px;font-size:15.7px;line-height:17.540px;color:#000">Exam Room 1 (5m) | Visit</span>
<span class="t" style="left:223.50px;top:697.79px;font-size:15.7px;line-height:17.540px;color:#000;">1:15 PM</span>
<span class="t" style="left:367.21px;top:697.79px;font-size:15.7px;line-height:17.540px;color:#000;">Harris, Christine M.</span>
<span class="t" style="left:675.21px;top:697.79px;font-size:15.7px;line-height:17.540px;color:#000;">Blood Pressure Check</span>
<span class="t" style="left:1040.21px;top:697.79px;font-size:15.7px;line-height:17.540px;color:#000;">Butler, Internist E.</span>
<span class="t" style="left:1314.76px;top:697.79px;font-size:15.7px;line-height:17.540px;color:#000;">Office</span>
<span class="t" style="left:1624.5px;width:400px;text-align:center;top:700.09px;font-size:15.7px;line-height:17.540px;color:#000">Waiting Room (1m) | Visit</span>
<span class="t" style="left:223.50px;top:730.79px;font-size:15.7px;line-height:17.540px;color:#000;">1:30 PM</span>
<span class="t" style="left:368.47px;top:730.79px;font-size:15.7px;line-height:17.540px;color:#000;">Acardi, Sergio</span>
<span class="t" style="left:675.76px;top:730.79px;font-size:15.7px;line-height:17.540px;color:#000;">Occ Injury/Illness - Initial</span>
<span class="t" style="left:1040.21px;top:730.79px;font-size:15.7px;line-height:17.540px;color:#000;">Butler, Internist E.</span>
<span class="t" style="left:1314.76px;top:730.79px;font-size:15.7px;line-height:17.540px;color:#000;">Office</span>
<span class="t" style="left:1624.5px;width:400px;text-align:center;top:733.09px;font-size:15.7px;line-height:17.540px;color:#000">Checkin</span>
<span class="t" style="left:223.91px;top:764.79px;font-size:15.7px;line-height:17.540px;color:#000;">2:00 PM</span>
<span class="t" style="left:368.47px;top:764.79px;font-size:15.7px;line-height:17.540px;color:#000;">Anderson, Frederick</span>
<span class="t" style="left:675.21px;top:764.79px;font-size:15.7px;line-height:17.540px;color:#000;">Pre-Placement Exam</span>
<span class="t" style="left:1040.21px;top:764.79px;font-size:15.7px;line-height:17.540px;color:#000;">Butler, Internist E.</span>
<span class="t" style="left:1314.76px;top:764.79px;font-size:15.7px;line-height:17.540px;color:#000;">Office</span>
<span class="t" style="left:1624.5px;width:400px;text-align:center;top:767.09px;font-size:15.7px;line-height:17.540px;color:#000">Checkin</span>
</body></html>
